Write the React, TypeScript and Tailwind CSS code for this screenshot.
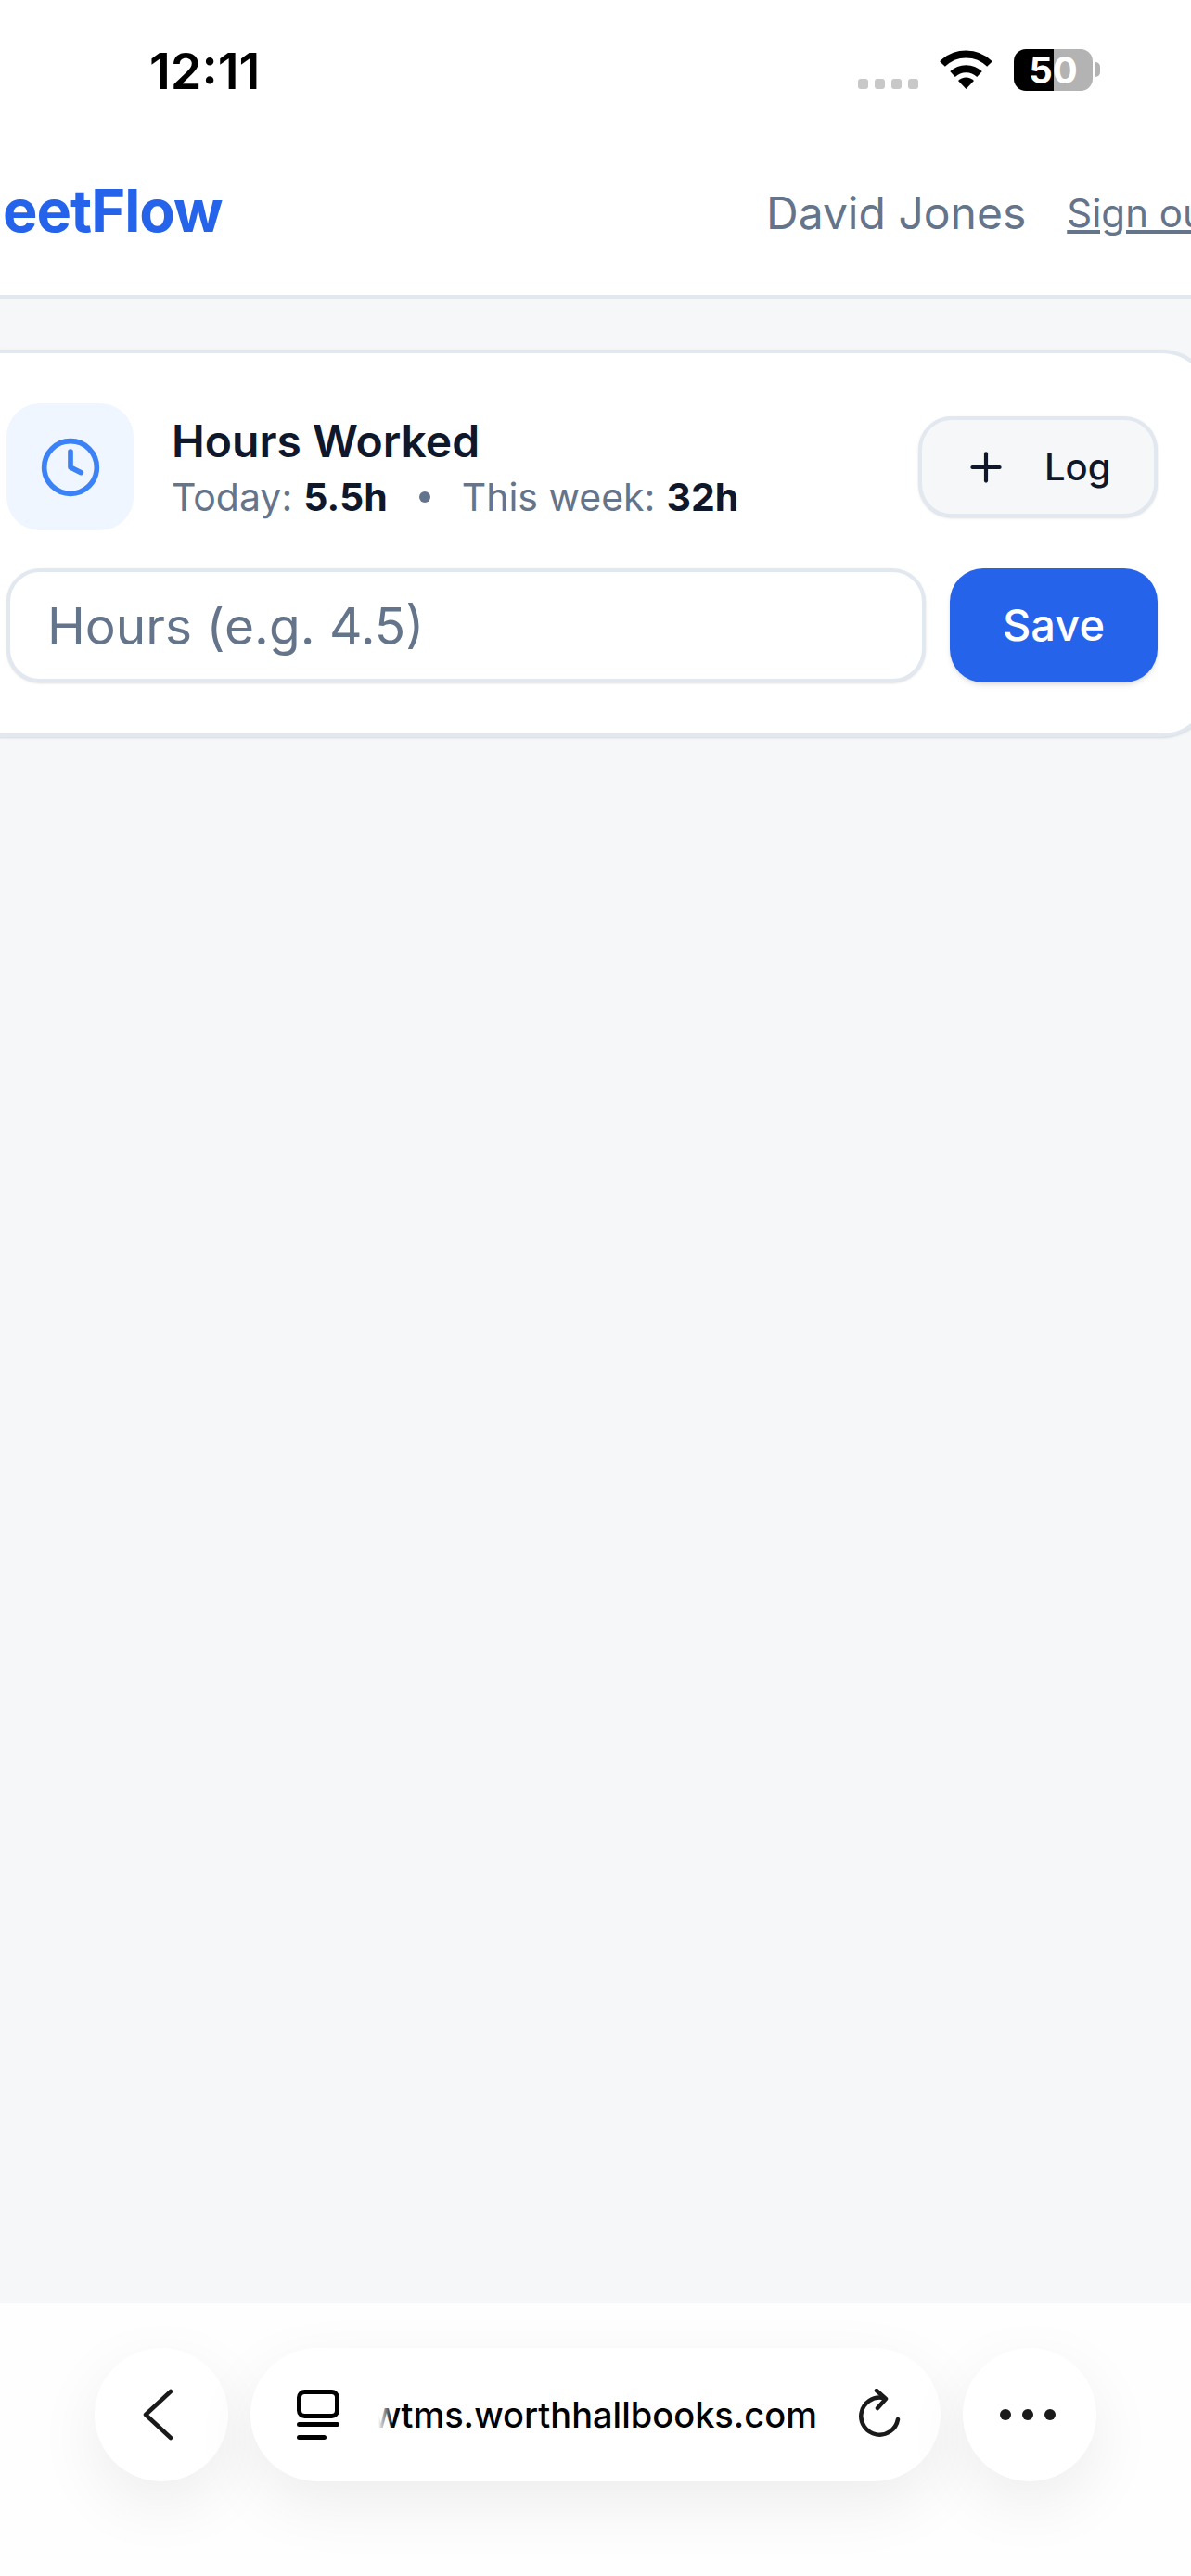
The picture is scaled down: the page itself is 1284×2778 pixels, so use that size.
import { Clock, Plus } from 'lucide-react'

const StatusBar = () => (
  <div className="flex h-[152px] items-start bg-white pt-[50px] pl-[161px]">
    <span className="text-[54px] leading-[54px] font-semibold text-black">12:11</span>
    <div className="ml-auto flex items-start pr-[98px]">
      {/* cellular dots */}
      <div className="mt-[35px] flex gap-[7px]">
        <div className="h-[11px] w-[11px] rounded-[3px] bg-[#c8c8c8]" />
        <div className="h-[11px] w-[11px] rounded-[3px] bg-[#c8c8c8]" />
        <div className="h-[11px] w-[11px] rounded-[3px] bg-[#c8c8c8]" />
        <div className="h-[11px] w-[11px] rounded-[3px] bg-[#c8c8c8]" />
      </div>
      <svg className="mt-[4px] ml-[23px]" width="57" height="42" viewBox="0 0 57 42">
        <path d="M3 15 A36 36 0 0 1 54 15" fill="none" stroke="#000" strokeWidth="8" />
        <path d="M14 26 A21 21 0 0 1 43 26" fill="none" stroke="#000" strokeWidth="8" />
        <path d="M20 33 A12 12 0 0 1 37 33 L28.5 42 Z" fill="#000" />
      </svg>
      {/* battery */}
      <div className="mt-[3px] ml-[23px] h-[45px] w-[85px] rounded-[13px] bg-[linear-gradient(90deg,#000_43px,#b3b3b3_43px)] text-center text-[40px] leading-[45px] font-bold text-white">
        50
      </div>
      <div className="mt-[17px] ml-[3px] h-[16px] w-[5px] rounded-r-full bg-[#b3b3b3]" />
    </div>
  </div>
)

const Header = () => (
  <header className="flex h-[170px] shrink-0 items-start overflow-hidden border-b-4 border-[#e2e8f0] bg-white pl-[3px]">
    <span className="mt-[35px] w-[823px] shrink-0 text-[63px] leading-[80px] font-bold tracking-[-1px] text-[#2563eb]">eetFlow</span>
    <span className="mt-[47px] shrink-0 text-[48px] leading-[62px] whitespace-nowrap text-[#64748b]">David Jones</span>
    <a className="mt-[50px] ml-[44px] shrink-0 text-[42px] leading-[56px] whitespace-nowrap text-[#64748b] underline">Sign out</a>
  </header>
)

const HoursCard = () => (
  <section className="ml-[-53px] w-[1361px] rounded-[56px] border-4 border-[#e2e8f0] bg-white px-[56px] pt-[54px] pb-[55px] shadow-sm">
    <div className="flex items-center justify-between">
      <div className="flex items-center">
        <div className="flex h-[137px] w-[137px] items-center justify-center rounded-[36px] bg-[#eff6ff]">
          <Clock size={68} className="text-[#3b82f6]" />
        </div>
        <div className="ml-[41px]">
          <div className="mt-[3px] text-[48px] leading-[60px] font-semibold text-[#0f172a]">Hours Worked</div>
          <div className="mt-[2px] flex items-center text-[41px] leading-[56px] text-[#64748b]">
            <span>Today:</span>
            <span className="ml-[12px] font-bold text-[#0f172a]">5.5h</span>
            <span className="mx-[34px] h-[12px] w-[12px] rounded-full bg-[#64748b]" />
            <span>This week:</span>
            <span className="ml-[12px] font-bold text-[#0f172a]">32h</span>
          </div>
        </div>
      </div>
      <button className="flex h-[109px] w-[258px] items-center rounded-[36px] border-4 border-[#e2e8f0] bg-[#f6f7f9] pl-[44px] text-[40px] font-medium text-[#0f172a] shadow-sm">
        <Plus size={50} strokeWidth={2} />
        <span className="ml-[38px]">Log</span>
      </button>
    </div>
    <div className="mt-[41px] flex gap-[26px]">
      <input
        placeholder="Hours (e.g. 4.5)"
        className="h-[123px] min-w-0 flex-1 rounded-[36px] border-4 border-[#e2e8f0] bg-white px-[40px] text-[55px] shadow-sm outline-none placeholder:text-[#64748b]"
      />
      <button className="h-[123px] w-[224px] rounded-[36px] bg-[#2563eb] text-[47px] font-medium text-white shadow-md">
        Save
      </button>
    </div>
  </section>
)

const BrowserBar = () => (
  <div className="flex h-[294px] shrink-0 justify-center gap-[24px] bg-[#fefefe] pt-[48px]">
    <button className="flex h-[144px] w-[144px] items-center justify-center rounded-full bg-white pr-[8px] shadow-[0_24px_70px_rgba(0,0,0,0.07)]">
      <svg width="33" height="56" viewBox="0 0 33 56" fill="none" stroke="#1a1a1a" strokeWidth="4.5" strokeLinecap="round" strokeLinejoin="round">
        <path d="M30 3 L3 28 L30 53" />
      </svg>
    </button>
    <div className="flex h-[144px] w-[744px] items-center rounded-[72px] bg-white pl-[50px] shadow-[0_24px_70px_rgba(0,0,0,0.07)]">
      {/* tabs icon */}
      <svg width="46" height="54" viewBox="0 0 46 54" fill="none">
        <rect x="2.5" y="2.5" width="41" height="26" rx="6" stroke="#000" strokeWidth="5" />
        <rect x="0" y="35" width="46" height="5" rx="2.5" fill="#000" />
        <rect x="0" y="49" width="32" height="5" rx="2.5" fill="#000" />
      </svg>
      <div className="relative ml-[42px] flex w-[473px] justify-end overflow-hidden">
        <span className="text-[38px] leading-[50px] font-medium whitespace-nowrap text-black">wtms.worthhallbooks.com</span>
        <div className="absolute inset-y-0 left-0 w-[16px] bg-gradient-to-r from-white to-transparent" />
      </div>
      {/* reload */}
      <svg className="ml-[44px]" width="46" height="56" viewBox="0 0 46 56" fill="none" stroke="#1a1a1a" strokeWidth="4.5" strokeLinecap="round" strokeLinejoin="round">
        <path d="M27 10 A20 20 0 1 0 43 33" />
        <path d="M20 2 L30 11 L21 21" />
      </svg>
    </div>
    <button className="flex h-[144px] w-[144px] items-center justify-center gap-[12px] rounded-full bg-white pr-[4px] shadow-[0_24px_70px_rgba(0,0,0,0.07)]">
      <span className="h-[12px] w-[12px] rounded-full bg-[#1a1a1a]" />
      <span className="h-[12px] w-[12px] rounded-full bg-[#1a1a1a]" />
      <span className="h-[12px] w-[12px] rounded-full bg-[#1a1a1a]" />
    </button>
  </div>
)

export default function App() {
  return (
    <div className="flex h-[2778px] w-[1284px] flex-col overflow-hidden bg-[#f6f7f9] font-['Inter',sans-serif]">
      <StatusBar />
      <Header />
      <main className="flex-1 pt-[55px]">
        <HoursCard />
      </main>
      <BrowserBar />
    </div>
  )
}
